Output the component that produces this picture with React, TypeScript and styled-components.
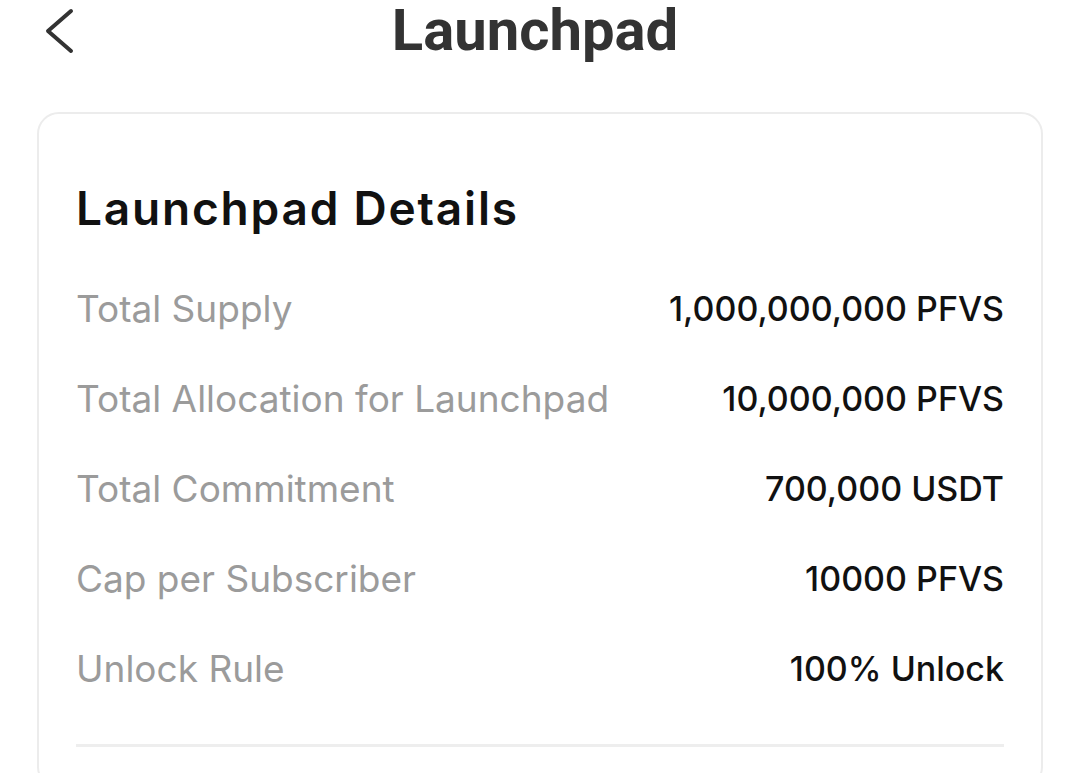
import React from 'react';
import styled, { createGlobalStyle } from 'styled-components';

const GlobalStyle = createGlobalStyle`
  body {
    margin: 0;
    background: #ffffff;
    font-family: Inter, "Noto Sans", sans-serif;
  }
`;

const Page = styled.div`
  width: 1080px;
  min-height: 773px;
  overflow: hidden;
`;

const Header = styled.div`
  display: grid;
  grid-template-columns: 1fr auto 1fr;
  align-items: center;
  height: 60px;
`;

const BackButton = styled.button`
  justify-self: start;
  display: flex;
  align-items: center;
  margin-left: 44px;
  padding: 0;
  border: none;
  background: none;
  cursor: pointer;
`;

const Title = styled.h1`
  margin: 0;
  font-family: Roboto, sans-serif;
  font-weight: 700;
  font-size: 58px;
  line-height: 60px;
  color: #333333;
  transform: translateX(-5px);
`;

const Card = styled.section`
  margin: 52px 37px 0;
  padding: 67px 37px 40px;
  border: 2px solid #ececec;
  border-radius: 22px;
`;

const CardTitle = styled.h2`
  margin: 0 0 28px;
  font-weight: 600;
  font-size: 46px;
  line-height: 1.2;
  letter-spacing: 1.8px;
  color: #111111;
`;

const Row = styled.div`
  display: flex;
  justify-content: space-between;
  align-items: center;
  height: 90px;
  line-height: 90px;
`;

const Label = styled.span`
  font-size: 37px;
  font-weight: 400;
  color: #9b9b9b;
`;

const Value = styled.span`
  font-size: 34px;
  font-weight: 500;
  color: #111111;
`;

const Divider = styled.hr`
  margin: 30px 0 0;
  height: 3px;
  border: none;
  background: #eeeeee;
`;

const rows = [
  { label: 'Total Supply', value: '1,000,000,000 PFVS' },
  { label: 'Total Allocation for Launchpad', value: '10,000,000 PFVS' },
  { label: 'Total Commitment', value: '700,000 USDT' },
  { label: 'Cap per Subscriber', value: '10000 PFVS' },
  { label: 'Unlock Rule', value: '100% Unlock' },
];

const App = () => {
  return (
    <Page>
      <GlobalStyle />
      <Header>
        <BackButton aria-label="Back">
          <svg width="32" height="50" viewBox="0 0 32 50">
            <polyline points="27,6 4,26 27,46" fill="none" stroke="#333333" strokeWidth="4" strokeLinecap="round" strokeLinejoin="round" />
          </svg>
        </BackButton>
        <Title>Launchpad</Title>
      </Header>
      <Card>
        <CardTitle>Launchpad Details</CardTitle>
        {rows.map(row => (
          <Row key={row.label}>
            <Label>{row.label}</Label>
            <Value>{row.value}</Value>
          </Row>
        ))}
        <Divider />
      </Card>
    </Page>
  );
};

export default App;
